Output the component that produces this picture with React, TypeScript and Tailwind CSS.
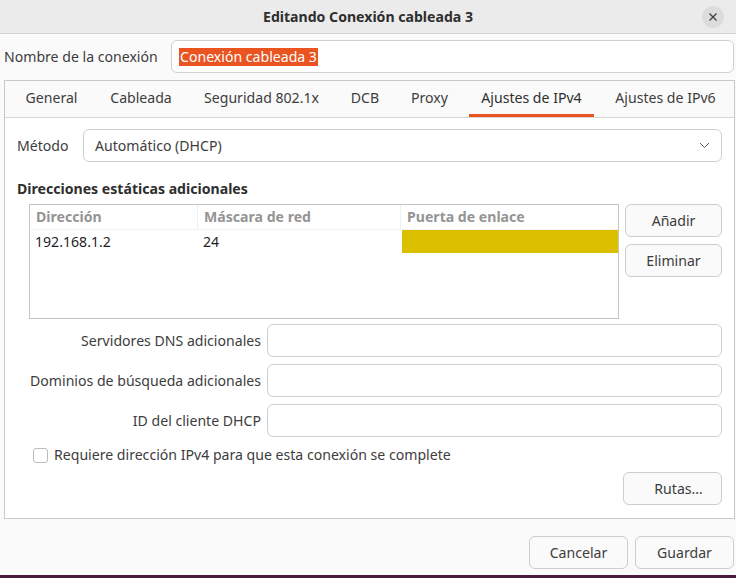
import React from 'react';

const TABS = [
  { label: 'General', w: 'w-[75px]' },
  { label: 'Cableada', w: 'w-[84px]' },
  { label: 'Seguridad 802.1x', w: 'w-[137px]' },
  { label: 'DCB', w: 'w-[50px]' },
  { label: 'Proxy', w: 'w-[59px]' },
  { label: 'Ajustes de IPv4', w: 'w-[125px]', active: true },
  { label: 'Ajustes de IPv6', w: 'w-[123px]' },
];

const FIELDS = ['Servidores DNS adicionales', 'Dominios de búsqueda adicionales', 'ID del cliente DHCP'];

function Button({ children, className = '' }: { children: React.ReactNode; className?: string }) {
  return (
    <div className={`h-[33px] flex items-center justify-center rounded-[6px] border border-[#cdcdcd] bg-[#fafafa] text-[#3d3d3d] ${className}`}>
      {children}
    </div>
  );
}

function App() {
  return (
    <div
      className="w-[736px] h-[578px] bg-[#fafafa] flex flex-col overflow-hidden text-[14.1px] text-[#3d3d3d]"
      style={{ fontFamily: '"Noto Sans", "Open Sans", sans-serif' }}
    >
      {/* Title bar */}
      <div className="h-[34px] shrink-0 flex items-center bg-[#ebebeb] border-b border-[#d2d2d2]">
        <div className="w-[34px]" />
        <div className="flex-1 text-center font-bold text-[#2e2e2e]">Editando Conexión cableada 3</div>
        <div className="w-[34px] flex items-center">
          <div className="w-[22px] h-[22px] rounded-full bg-[#dcdcdc] flex items-center justify-center">
            <svg width="10" height="10" viewBox="0 0 10 10">
              <path d="M1.5 1.5 L8.5 8.5 M8.5 1.5 L1.5 8.5" stroke="#3d3d3d" strokeWidth="1.3" />
            </svg>
          </div>
        </div>
      </div>

      {/* Connection name */}
      <div className="mt-[6px] flex items-center pl-[4px] pr-[2px]">
        <div className="w-[167px]">Nombre de la conexión</div>
        <div className="flex-1 h-[33px] rounded-[6px] border border-[#d0d0d0] bg-white flex items-center pl-[7px]">
          <span className="bg-[#e95420] text-white leading-[18px] px-[1px]">Conexión cableada 3</span>
        </div>
      </div>

      {/* Notebook */}
      <div className="mt-[7px] ml-[4px] mr-[1px] h-[439px] border border-[#c9c9c9] flex flex-col">
        <div className="h-[37px] shrink-0 flex gap-[10px] pl-[9px] border-b border-[#d6d6d6] bg-[#fafafa]">
          {TABS.map((t) => (
            <div
              key={t.label}
              className={`${t.w} flex items-center justify-center border-b-[3px] ${t.active ? 'border-[#e95420] text-[#2e2e2e]' : 'border-transparent'}`}
            >
              {t.label}
            </div>
          ))}
        </div>

        <div className="flex-1 bg-white px-[12px] pt-[11px] flex flex-col">
          {/* Método */}
          <div className="flex items-center">
            <div className="w-[66px]">Método</div>
            <div className="flex-1 h-[33px] rounded-[6px] border border-[#d0d0d0] bg-white flex items-center justify-between pl-[11px] pr-[11px]">
              <span>Automático (DHCP)</span>
              <svg width="11" height="7" viewBox="0 0 11 7">
                <path d="M1 1 L5.5 5.5 L10 1" fill="none" stroke="#5e5e5e" strokeWidth="1" />
              </svg>
            </div>
          </div>

          <div className="mt-[17px] font-bold text-[#2e2e2e] leading-[20px]">Direcciones estáticas adicionales</div>

          {/* Table + buttons */}
          <div className="mt-[5px] flex gap-[6px] pl-[12px]">
            <div className="w-[591px] h-[115px] border border-[#c4c4c4] bg-white flex flex-col">
              <div className="h-[24px] flex font-bold text-[#949494]">
                <div className="w-[168px] pl-[6px] flex items-center border-r border-[#f0f0f0]">Dirección</div>
                <div className="w-[203px] pl-[6px] flex items-center border-r border-[#f0f0f0]">Máscara de red</div>
                <div className="flex-1 pl-[6px] flex items-center">Puerta de enlace</div>
              </div>
              <div className="h-[24px] flex text-[#1f1f1f] border-t border-[#f3f3f3]">
                <div className="w-[168px] pl-[5px] flex items-center">192.168.1.2</div>
                <div className="w-[204px] pl-[5px] flex items-center">24</div>
                <div className="flex-1 bg-[#dcc000]" />
              </div>
            </div>
            <div className="flex flex-col gap-[7px]">
              <Button className="w-[97px]">Añadir</Button>
              <Button className="w-[97px]">Eliminar</Button>
            </div>
          </div>

          {/* Extra fields */}
          <div className="mt-[5px] flex flex-col gap-[7px]">
            {FIELDS.map((f) => (
              <div key={f} className="flex items-center gap-[6px]">
                <div className="w-[244px] text-right">{f}</div>
                <div className="flex-1 h-[33px] rounded-[6px] border border-[#d0d0d0] bg-white" />
              </div>
            ))}
          </div>

          <div className="mt-[8px] h-[20px] flex items-center gap-[6px] pl-[16px]">
            <div className="w-[15px] h-[15px] rounded-[3px] border border-[#bdbdbd] bg-white" />
            <span>Requiere dirección IPv4 para que esta conexión se complete</span>
          </div>

          <div className="mt-[7px] flex justify-end">
            <Button className="w-[99px] pl-[12px]">Rutas…</Button>
          </div>
        </div>
      </div>

      {/* Dialog buttons */}
      <div className="mt-[17px] flex justify-end gap-[7px] pr-[2px]">
        <Button className="w-[99px]">Cancelar</Button>
        <Button className="w-[99px]">Guardar</Button>
      </div>

      <div className="mt-auto h-[3px] bg-[#4a1b3c]" />
    </div>
  );
}

export default App;
